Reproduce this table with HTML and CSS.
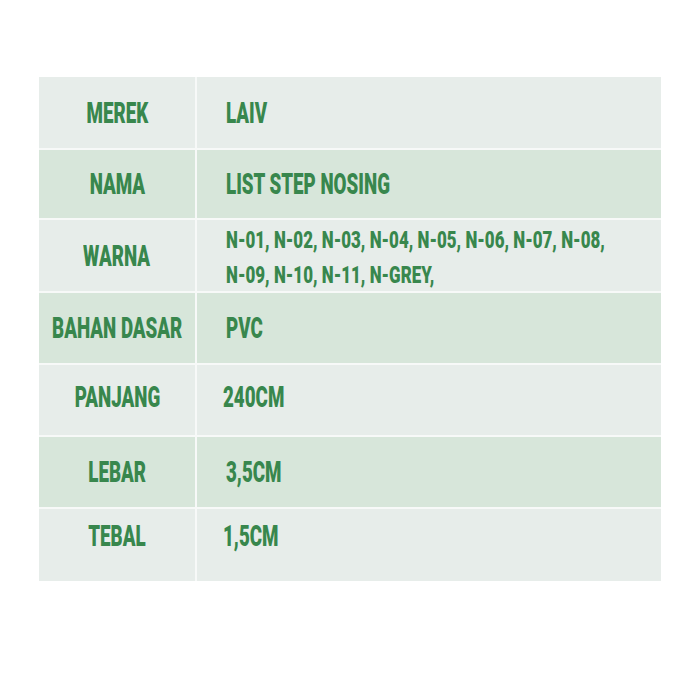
FILE: index.html
```html
<!DOCTYPE html>
<html>
<head>
<meta charset="utf-8">
<link rel="stylesheet" href="styles.css">
</head>
<body>
<div class="spec">
  <div class="cell label light"><span class="t">MEREK</span></div>
  <div class="cell value light"><span class="t">LAIV</span></div>
  <div class="cell label dark"><span class="t">NAMA</span></div>
  <div class="cell value dark"><span class="t">LIST STEP NOSING</span></div>
  <div class="cell label light"><span class="t">WARNA</span></div>
  <div class="cell value light down"><span class="t small">N-01, N-02, N-03, N-04, N-05, N-06, N-07, N-08,<br>N-09, N-10, N-11, N-GREY,</span></div>
  <div class="cell label dark"><span class="t">BAHAN DASAR</span></div>
  <div class="cell value dark"><span class="t">PVC</span></div>
  <div class="cell label light up-s"><span class="t">PANJANG</span></div>
  <div class="cell value light shift-l up-s"><span class="t">240CM</span></div>
  <div class="cell label dark"><span class="t">LEBAR</span></div>
  <div class="cell value dark"><span class="t">3,5CM</span></div>
  <div class="cell label light up-l"><span class="t">TEBAL</span></div>
  <div class="cell value light shift-l up-l"><span class="t">1,5CM</span></div>
</div>
</body>
</html>
```
FILE: styles.css
```css
html, body {
  margin: 0;
  padding: 0;
  background: #ffffff;
}
.spec {
  margin: 77px 0 0 39px;
  width: 622px;
  display: grid;
  grid-template-columns: 156px 464px;
  grid-template-rows: 71px 68px 71px 70px 70px 70px 72px;
  gap: 2px;
  background: #f7f9f8;
}
.cell {
  display: flex;
  align-items: center;
  overflow: visible;
  white-space: nowrap;
  font-family: Roboto, "Liberation Sans", sans-serif;
  font-weight: 900;
  color: #38874d;
}
.light { background: #e7edea; }
.dark { background: #d7e6da; }
.label { justify-content: center; }
.value { justify-content: flex-start; padding-left: 29px; }
.value.shift-l { padding-left: 26px; }
.down { padding-top: 5px; }
.up-s { padding-bottom: 7px; }
.up-l { padding-bottom: 18px; }
.t {
  display: inline-block;
  font-size: 30px;
  line-height: 30px;
  transform: scaleX(0.625);
}
.label .t { transform-origin: center center; }
.value .t { transform-origin: left center; }
.t.small {
  font-size: 24px;
  line-height: 35px;
  transform: scaleX(0.705);
}
```
